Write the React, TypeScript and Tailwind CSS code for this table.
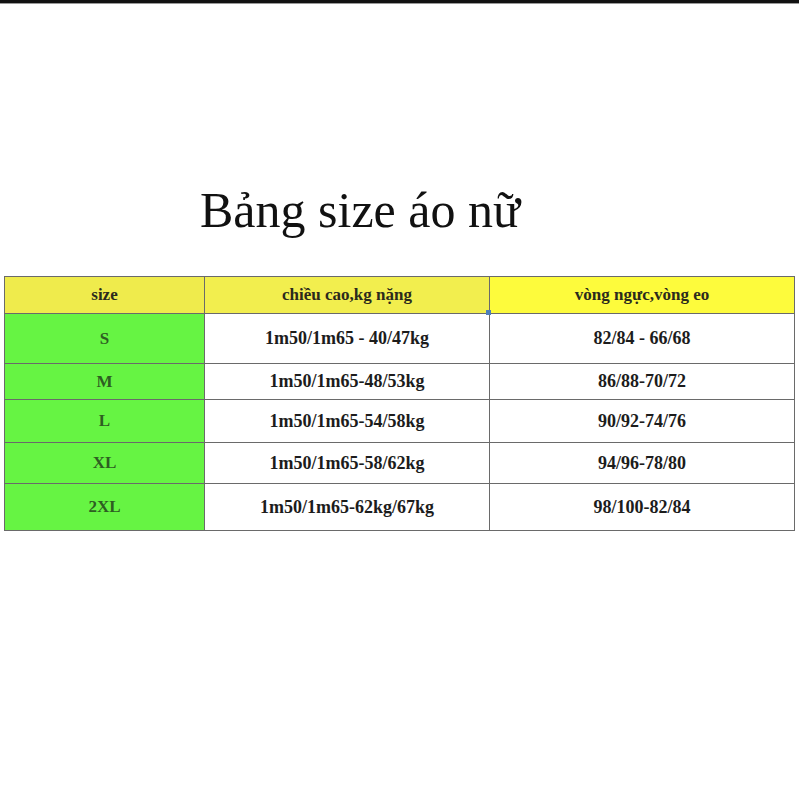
import React from "react";

const rows = [
  { size: "S", h: "1m50/1m65 - 40/47kg", v: "82/84 - 66/68", ht: "h-[50px]" },
  { size: "M", h: "1m50/1m65-48/53kg", v: "86/88-70/72", ht: "h-[36px]" },
  { size: "L", h: "1m50/1m65-54/58kg", v: "90/92-74/76", ht: "h-[43px]" },
  { size: "XL", h: "1m50/1m65-58/62kg", v: "94/96-78/80", ht: "h-[41px]" },
  { size: "2XL", h: "1m50/1m65-62kg/67kg", v: "98/100-82/84", ht: "h-[47px]" },
];

export default function App() {
  return (
    <div className="w-[799px] h-[799px] bg-white overflow-hidden" style={{ fontFamily: '"Liberation Serif", "Times New Roman", serif' }}>
      <div className="h-[3px] bg-[#111]" />
      <div className="h-[1px] bg-[#999]" />
      <div className="pt-[177px] pl-[200px] text-[50px] leading-[58px] text-[#111]">Bảng size áo nữ</div>
      <div className="relative ml-[4px] mt-[37px] w-[790px]">
        <table className="w-full border-collapse table-fixed font-bold">
          <colgroup>
            <col className="w-[200px]" />
            <col className="w-[285px]" />
            <col className="w-[305px]" />
          </colgroup>
          <tbody>
            <tr className="h-[37px]">
              <td className="border border-[#6a6a6a] bg-[#efeb4c] text-center text-[17px] text-[#2b2a1c] p-0">size</td>
              <td className="border border-[#6a6a6a] bg-[#f2ee4e] text-center text-[17px] text-[#2b2a1c] p-0">chiều cao,kg nặng</td>
              <td className="border border-[#6a6a6a] bg-[#fdfb3c] text-center text-[17px] text-[#2b2a1c] p-0">vòng ngực,vòng eo</td>
            </tr>
            {rows.map((r) => (
              <tr key={r.size} className={r.ht}>
                <td className="border border-[#6a6a6a] bg-[#66f443] text-center text-[17px] text-[#2e5e22] p-0">{r.size}</td>
                <td className="border border-[#6a6a6a] bg-white text-center text-[18px] text-[#1c1c1c] p-0">{r.h}</td>
                <td className="border border-[#6a6a6a] bg-white text-center text-[18px] text-[#1c1c1c] p-0">{r.v}</td>
              </tr>
            ))}
          </tbody>
        </table>
        <div className="absolute left-[482px] top-[34px] w-[5px] h-[5px] bg-[#4f7fb8]" />
      </div>
    </div>
  );
}
